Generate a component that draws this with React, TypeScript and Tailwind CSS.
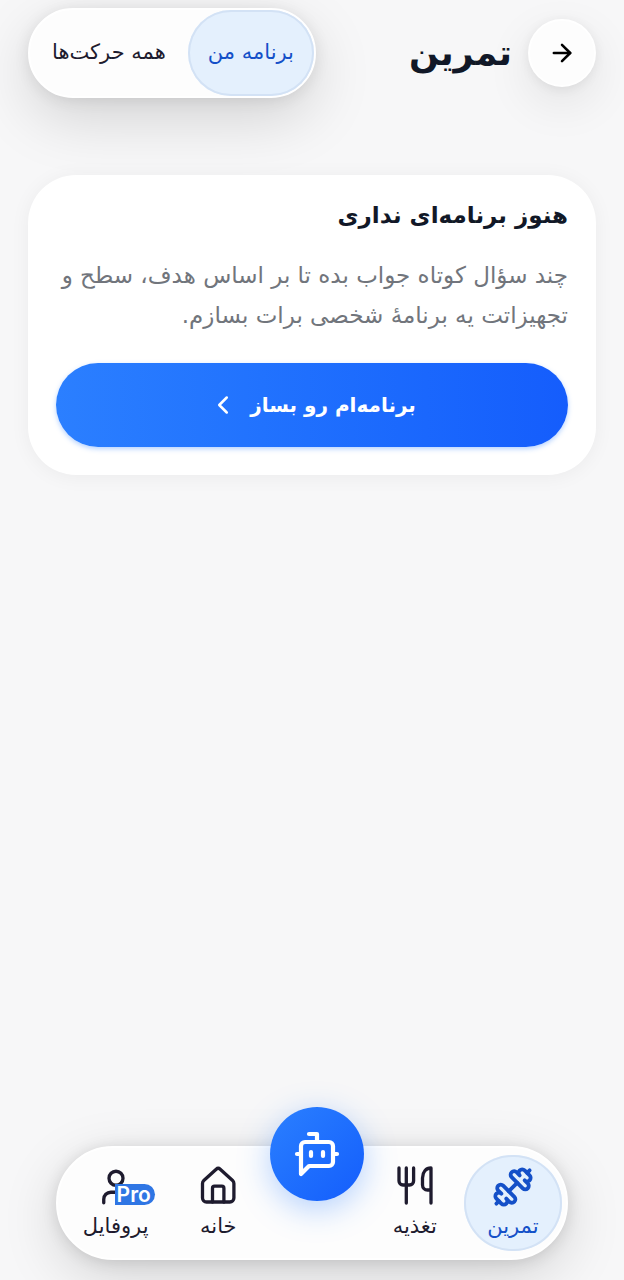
import React from 'react';
import { ArrowRight, ChevronLeft, Dumbbell, User } from 'lucide-react';
import clsx from 'clsx';

const ForkKnifeIcon = () => (
  <svg
    width="42"
    height="42"
    viewBox="0 0 42 42"
    fill="none"
    stroke="currentColor"
    strokeWidth="3.3"
    strokeLinecap="round"
    strokeLinejoin="round"
    aria-hidden="true"
  >
    <path d="M5 2v13a4 4 0 0 0 4 4h6.600a4 4 0 0 0 4-4V2" />
    <path d="M12.300 2v35" />
    <path d="M37 37V2c-5 0-8.500 4-8.500 10v7a5 5 0 0 0 5 5H37" />
  </svg>
);

const HomeIcon = () => (
  <svg
    width="42"
    height="42"
    viewBox="0 0 42 42"
    fill="none"
    stroke="currentColor"
    strokeWidth="3.3"
    strokeLinecap="round"
    strokeLinejoin="round"
    aria-hidden="true"
  >
    <path d="M5.5 17.5a4 4 0 0 1 1.3-3L19.2 3.2a3 3 0 0 1 4 0l12.4 11.3a4 4 0 0 1 1.3 3V32a4 4 0 0 1-4 4H9.5a4 4 0 0 1-4-4z" />
    <path d="M15.5 36V22.2a2 2 0 0 1 2-2h7.4a2 2 0 0 1 2 2V36" />
  </svg>
);

const BotIcon = () => (
  <svg
    width="48"
    height="48"
    viewBox="0 0 24 24"
    fill="none"
    stroke="currentColor"
    strokeWidth="2.1"
    strokeLinecap="round"
    strokeLinejoin="round"
    aria-hidden="true"
  >
    <path d="M12 6V2H8" />
    <path d="m8 18-4 4V8a2 2 0 0 1 2-2h12a2 2 0 0 1 2 2v8a2 2 0 0 1-2 2Z" />
    <path d="M2 12h2" />
    <path d="M9 11v2" />
    <path d="M15 11v2" />
    <path d="M20 12h2" />
  </svg>
);

interface NavItemProps {
  label: string;
  icon: React.ReactNode;
  active?: boolean;
  badge?: string;
}

const NavItem: React.FC<NavItemProps> = ({ label, icon, active, badge }) => (
  <a
    href="#"
    aria-current={active ? 'page' : undefined}
    className={clsx(
      'flex h-24 flex-col items-center justify-center gap-1 rounded-full',
      active
        ? 'bg-[#e4f0fd] text-[#1450c8] shadow-[inset_0_0_0_2px_#d3e2f5]'
        : 'text-[#1e1b2e]'
    )}
  >
    <span className="relative">
      {icon}
      {badge && (
        <span
          dir="ltr"
          className="absolute top-[18px] left-5 rounded-r-full bg-[#2f76e4] pr-1 pl-0.5 font-[Inter] text-[21px] leading-[21px] font-semibold text-white"
        >
          {badge}
        </span>
      )}
    </span>
    <span className="text-[21px] leading-7 whitespace-nowrap">{label}</span>
  </a>
);

export default function App() {
  return (
    <div
      dir="rtl"
      lang="fa"
      className="flex min-h-screen flex-col bg-[#f7f7f8] font-['DejaVu_Sans',sans-serif] text-[#111827]"
    >
      <header className="flex items-center justify-between px-7 pt-2">
        <div className="flex items-center gap-4">
          <button
            type="button"
            aria-label="بازگشت"
            className="flex size-[68px] items-center justify-center rounded-full border-2 border-white bg-[#fdfdfd] text-black shadow-[0_16px_48px_rgba(0,0,0,0.09),0_2px_12px_rgba(0,0,0,0.07)]"
          >
            <ArrowRight size={28} strokeWidth={2.2} />
          </button>
          <h1 className="text-[35px] font-bold">تمرین</h1>
        </div>
        <div className="flex h-[90px] rounded-full border-2 border-white bg-[#fdfdfd] shadow-[0_20px_60px_rgba(0,0,0,0.15),0_2px_16px_rgba(0,0,0,0.09)]">
          <button
            type="button"
            aria-pressed="true"
            className="rounded-full bg-[#e4f0fd] px-5 text-[21px] whitespace-nowrap text-[#1450c8] shadow-[inset_0_0_0_2px_#d3e2f5]"
          >
            برنامه من
          </button>
          <button
            type="button"
            aria-pressed="false"
            className="rounded-full px-[22px] text-[21px] whitespace-nowrap text-[#1e1b2e]"
          >
            همه حرکت‌ها
          </button>
        </div>
      </header>

      <main className="mt-[77px] px-7">
        <section className="rounded-[48px] bg-white px-7 pt-5 pb-7 shadow-[0_2px_20px_rgba(0,0,0,0.05)]">
          <h2 className="text-[23px] leading-10 font-bold">هنوز برنامه‌ای نداری</h2>
          <p className="mt-5 text-[23px] leading-10 text-[#71757c]">
            چند سؤال کوتاه جواب بده تا بر اساس هدف، سطح و تجهیزاتت یه برنامهٔ شخصی برات بسازم.
          </p>
          <button
            type="button"
            className="mt-7 flex h-[84px] w-full items-center justify-center gap-3 rounded-full bg-linear-to-r from-[#2b7fff] to-[#155dfc] text-xl font-bold text-white shadow-[0_2px_5px_rgba(43,127,255,0.35)]"
          >
            برنامه‌ام رو بساز
            <ChevronLeft size={30} strokeWidth={2} />
          </button>
        </section>
      </main>

      <nav className="mx-14 mt-auto mb-5 grid grid-cols-[98fr_98fr_98fr_98fr_107fr] items-center rounded-full border-2 border-white bg-[#fdfdfd] px-1 py-[7px] shadow-[0_16px_56px_rgba(0,0,0,0.15),0_2px_16px_rgba(0,0,0,0.12)]">
        <NavItem label="تمرین" icon={<Dumbbell size={42} strokeWidth={2.2} />} active />
        <NavItem label="تغذیه" icon={<ForkKnifeIcon />} />
        <button
          type="button"
          aria-label="دستیار"
          className="-mt-[98px] flex size-[94px] items-center justify-center justify-self-center rounded-full bg-linear-to-br from-[#2b7fff] to-[#155dfc] text-white shadow-[0_8px_32px_rgba(43,127,255,0.35)]"
        >
          <BotIcon />
        </button>
        <NavItem label="خانه" icon={<HomeIcon />} />
        <NavItem label="پروفایل" icon={<User size={42} strokeWidth={1.9} />} badge="Pro" />
      </nav>
    </div>
  );
}
